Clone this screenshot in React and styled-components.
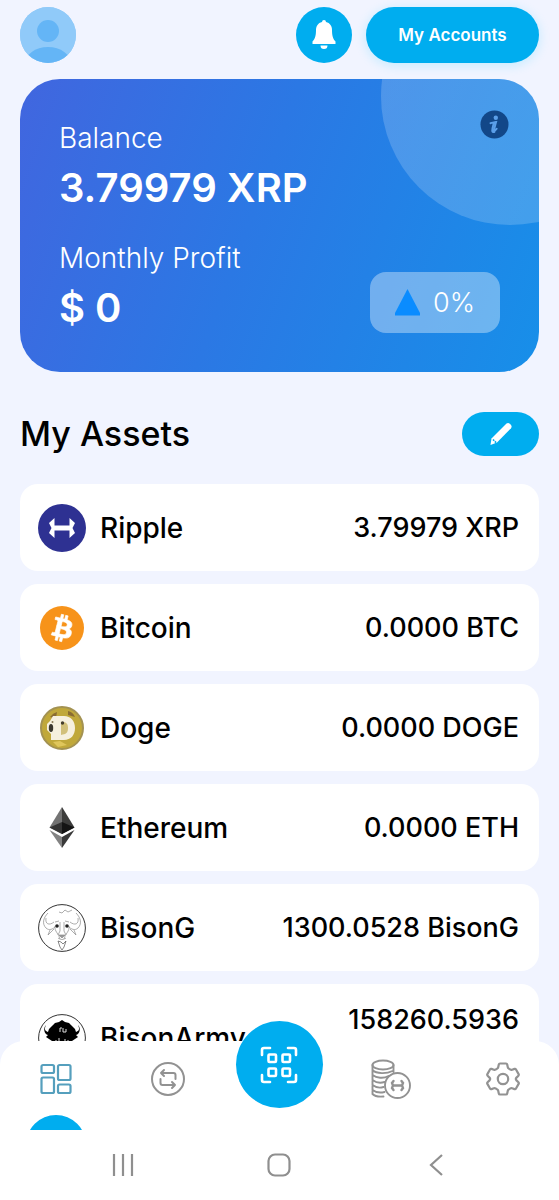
import React from "react";
import styled, { createGlobalStyle } from "styled-components";

const Global = createGlobalStyle`
  * { box-sizing: border-box; }
  body { margin: 0; background: #f1f4ff; color: #000; font-family: Inter, "Liberation Sans", sans-serif; }
  button { border: 0; padding: 0; margin: 0; font: inherit; color: inherit; background: none; cursor: pointer; }
  h1, h2, p, dl, dt, dd, ul { margin: 0; padding: 0; font-weight: inherit; }
  svg { display: block; flex: none; }
`;

const Shell = styled.div`
  display: flex;
  flex-direction: column;
  height: 100vh;
  overflow: hidden;
`;

const Content = styled.main`
  flex: 1;
  min-height: 0;
  overflow: hidden;
  padding: 7px 20px 0;
`;

const TopBar = styled.header`
  display: flex;
  align-items: center;
  gap: 14px;
`;

const RoundButton = styled.button`
  width: 56px;
  height: 56px;
  border-radius: 50%;
  overflow: hidden;
  display: flex;
  align-items: center;
  justify-content: center;
  background: ${(p) => p.$fill};
  margin-right: ${(p) => (p.$first ? "auto" : "0")};
`;

const AccountsButton = styled.button`
  height: 56px;
  width: 173px;
  border-radius: 28px;
  background: #00adef;
  color: #fff;
  font-size: 17px;
  font-weight: 600;
  box-shadow: 0 2px 12px #00c8ff33;
`;

const BalanceCard = styled.section`
  position: relative;
  overflow: hidden;
  margin-top: 16px;
  padding: 41px 39px;
  height: 293px;
  border-radius: 40px;
  background: linear-gradient(110deg, #4166df 0%, #2b78e4 45%, #178fe9 100%);
  color: #fff;
`;

const Bubble = styled.div`
  position: absolute;
  top: -112px;
  right: -100px;
  width: 258px;
  height: 258px;
  border-radius: 50%;
  background: linear-gradient(135deg, #ffffff30, #ffffff2c);
`;

const InfoButton = styled.button`
  position: absolute;
  top: 31px;
  right: 30px;
`;

const Stats = styled.dl`
  display: flex;
  flex-direction: column;
`;

const StatLabel = styled.dt`
  font-size: 28px;
  font-weight: 300;
  line-height: 36px;
`;

const StatValue = styled.dd`
  font-size: 40px;
  font-weight: 600;
  line-height: 64px;
  margin-bottom: 20px;
`;

const ChangeBadge = styled.div`
  position: absolute;
  right: 39px;
  bottom: 39px;
  width: 130px;
  height: 61px;
  border-radius: 16px;
  display: flex;
  align-items: center;
  justify-content: center;
  gap: 13px;
  background: #ffffff5c;
  font-size: 27px;
  font-weight: 300;
`;

const SectionHead = styled.div`
  display: flex;
  align-items: center;
  justify-content: space-between;
  margin-top: 40px;
`;

const SectionTitle = styled.h1`
  font-size: 34px;
  font-weight: 500;
  line-height: 44px;
`;

const EditButton = styled.button`
  width: 77px;
  height: 44px;
  border-radius: 22px;
  display: flex;
  align-items: center;
  justify-content: center;
  background: #00adef;
`;

const AssetList = styled.ul`
  display: flex;
  flex-direction: column;
  gap: 13px;
  margin-top: 28px;
  list-style: none;
`;

const AssetRow = styled.li`
  display: flex;
  align-items: center;
  gap: 14px;
  min-height: 87px;
  padding: 18px 20px 18px 18px;
  border-radius: 18px;
  background: #fff;
  font-weight: 500;
  line-height: 36px;
`;

const AssetName = styled.span`
  font-size: 28px;
`;

const AssetAmount = styled.span`
  flex: 1;
  font-size: 27px;
  text-align: right;
`;

const TabBar = styled.nav`
  position: relative;
  flex: none;
  display: grid;
  grid-template-columns: repeat(5, 1fr);
  justify-items: center;
  height: 89px;
  margin-top: -30px;
  padding-top: 18px;
  border-radius: 24px 24px 0 0;
  background: #fff;
`;

const Tab = styled.button`
  width: 40px;
  height: 40px;
  display: flex;
  align-items: center;
  justify-content: center;
`;

const ScanButton = styled.button`
  width: 87px;
  height: 87px;
  margin-top: -38px;
  border-radius: 50%;
  display: flex;
  align-items: center;
  justify-content: center;
  background: #00adef;
`;

const ActiveMark = styled.div`
  position: absolute;
  left: 26px;
  bottom: 0;
  width: 60px;
  height: 15px;
  overflow: hidden;
  &::before {
    content: "";
    display: block;
    width: 60px;
    height: 60px;
    border-radius: 50%;
    background: #00adef;
  }
`;

const SystemBar = styled.footer`
  flex: none;
  display: flex;
  justify-content: space-around;
  align-items: center;
  height: 70px;
  padding: 0 45px;
  background: #fff;
`;

const Avatar = () => (
  <svg width="56" height="56" viewBox="0 0 56 56">
    <rect width="56" height="56" fill="#90caf9" />
    <circle cx="28" cy="24" r="11" fill="#64b5f6" />
    <ellipse cx="28" cy="57" rx="23" ry="17" fill="#64b5f6" />
  </svg>
);

const Bell = () => (
  <svg width="24" height="30" viewBox="0 0 24 30" fill="#fff">
    <path d="M12 0a2 2 0 0 1 2 2c4 1 6 4 6 8 0 6 1 9 3.500 11.500V24H.5v-2.500C3 19 4 16 4 10c0-4 2-7 6-8a2 2 0 0 1 2-2ZM8.500 25.500h7a3.500 3.500 0 0 1-7 0Z" />
  </svg>
);

const Info = () => (
  <svg width="29" height="29" viewBox="0 0 29 29">
    <circle cx="14.500" cy="14.500" r="14" fill="#124788" />
    <circle cx="15.800" cy="7.800" r="2.200" fill="#5b9fe9" />
    <path d="M10.500 13.200c2-.4 3.900-1 5.600-1.200-.8 3-1.700 6-2.200 9 .9 0 1.700-.7 2.800-2.200M13.900 12.800c-.6 2.600-1.900 5.500-1.700 8 .1 1.300 1.400 1.500 2.300 1" fill="none" stroke="#5b9fe9" strokeWidth="1.900" strokeLinecap="round" />
  </svg>
);

const UpTriangle = () => (
  <svg width="25" height="27" viewBox="0 0 25 27">
    <path d="M12.500 0 25 24v2.500H0V24Z" fill="#0a8cff" />
  </svg>
);

const Pencil = () => (
  <svg width="24" height="24" viewBox="0 0 24 24">
    <path d="M17.500 1.500q1.800-1.200 3.300.3l1 1q1.600 1.700.2 3.400L8 20.500l-6.500 2.500L2.500 16.500Z" fill="#fff" />
    <path d="m4 17.500 3.200 3.300" fill="none" stroke="#00adef" strokeWidth="1.600" strokeDasharray="1.800 .8" />
  </svg>
);

const RippleLogo = () => (
  <svg width="48" height="48" viewBox="0 0 48 48">
    <circle cx="24" cy="24" r="24" fill="#2e3192" />
    <path d="M16.500 14 11 19l2.500 5-2.500 5 5.500 5v-7.500h15V34l5.500-5-2.500-5 2.500-5-5.500-5v7.500h-15Z" fill="#fff" />
  </svg>
);

const BitcoinLogo = () => (
  <svg width="48" height="48" viewBox="0 0 48 48">
    <circle cx="24" cy="24" r="22" fill="#f7931a" />
    <g transform="translate(2 2) scale(1.375)">
      <path fill="#fff" stroke="#fff" strokeWidth=".5" d="M23.189 14.020c.314-2.096-1.283-3.223-3.465-3.975l.708-2.840-1.728-.43-.690 2.765c-.454-.114-.920-.220-1.385-.326l.695-2.783L15.596 6l-.708 2.839c-.376-.086-.746-.170-1.104-.260l.002-.009-2.384-.595-.460 1.846s1.283.294 1.256.312c.700.175.826.638.805 1.006l-.806 3.235c.048.012.110.030.180.057l-.183-.045-1.130 4.532c-.086.212-.303.531-.793.410.018.025-1.256-.313-1.256-.313l-.858 1.978 2.250.561c.418.105.828.215 1.231.318l-.715 2.872 1.727.430.708-2.840c.472.127.930.245 1.378.357l-.706 2.828 1.728.430.715-2.866c2.948.558 5.164.333 6.097-2.333.752-2.146-.037-3.385-1.588-4.192 1.130-.260 1.980-1.003 2.207-2.538Zm-3.950 5.538c-.533 2.147-4.148.986-5.320.695l.950-3.805c1.172.293 4.929.872 4.370 3.110Zm.535-5.569c-.487 1.953-3.495.960-4.470.717l.860-3.450c.975.243 4.118.696 3.610 2.733Z" />
    </g>
  </svg>
);

const DogeLogo = () => (
  <svg width="48" height="48" viewBox="0 0 48 48">
    <circle cx="24" cy="24" r="21" fill="#c0a83a" stroke="#a39252" strokeWidth="2" />
    <path d="M30 7q5 1 7 6l-7-2ZM12 13q3-4 7-5l-1 6Z" fill="#8a6c31" />
    <path d="M15 12h11c7 0 11 5 11 12s-4 12-11 12H13v-6l-4-4v-6l3-3Z" fill="#f6f0de" />
    <path d="M23 18c5 0 7 1 7 6s-2 6-7 7Z" fill="#d2c07a" />
    <ellipse cx="13" cy="24" rx="2.200" ry="4" fill="#3b382e" />
    <circle cx="24.500" cy="19" r="1.700" fill="#443d2c" />
    <circle cx="14.500" cy="18" r="1" fill="#8a7b56" />
    <path d="m15 38 7-1 7 4-9 2Z" fill="#dfc65b" />
  </svg>
);

const EthereumLogo = () => (
  <svg width="48" height="48" viewBox="0 0 48 48">
    <path d="M24 3v27L11.500 23.500Z" fill="#737373" />
    <path d="M24 3v27l12.500-6.500Z" fill="#3c3c3b" />
    <path d="m24 18-12.500 5.500L24 30Z" fill="#343434" />
    <path d="m24 18 12.500 5.500L24 30Z" fill="#141414" />
    <path d="M11.500 26 24 33v11Z" fill="#828282" />
    <path d="M36.500 26 24 33v11Z" fill="#393939" />
  </svg>
);

const BisonGLogo = () => (
  <svg width="48" height="48" viewBox="0 0 48 48" fill="none" stroke="#8a8a8a" strokeWidth=".7">
    <circle cx="24" cy="24" r="23.400" stroke="#333" strokeWidth="1" />
    <path d="M10 9c-5 5-6 11-2 15 3 3 7 1 9-1M8 14c-1 6 3 8 8 4M38 9c5 5 6 11 2 15-3 3-7 1-9-1M40 14c1 6-3 8-8 4" />
    <path d="M17 22c-1 5 4 8 5 13M31 22c1 5-4 8-5 13M22 18v9l-2 4M26 18v9l2 4M20 34c3 2 5 2 8 0M16 25l-6 6 2-5M32 25l6 6-2-5M21 8l3 1 3-3 3 2 4-2M17 18l4-1M27 17l4 1" />
    <path d="m20 37 2 6 2 3 2-3 2-6-3 3-2-2Z" stroke="#555" />
    <circle cx="19" cy="22" r="1.800" fill="#222" stroke="none" />
    <circle cx="29" cy="22" r="1.800" fill="#222" stroke="none" />
    <path d="M21 31h6l-3 3Z" fill="#999" />
  </svg>
);

const BisonArmyLogo = () => (
  <svg width="48" height="48" viewBox="0 0 48 48">
    <circle cx="24" cy="24" r="23.400" fill="#fff" stroke="#333" />
    <path d="m24 6 3 2 4 1 3 3 3 3 1 3c3-1 4-3 2-7 3 3 2 9-2 10l2 2-6 4-2 13-8 5-8-5-2-13-6-4 2-2c-4-1-5-7-2-10-2 4-1 6 2 7l1-3 3-3 3-3 4-1Z" />
    <path d="M22 14v4M22 14h2M25 14v4h3v-3M18 26v5M21 24v7M27 25v6M30 26v4" fill="none" stroke="#ddd" />
  </svg>
);

const Dashboard = () => (
  <svg width="32" height="32" viewBox="0 0 32 32" fill="none" stroke="#559fbd" strokeWidth="2.200">
    <rect x="1.500" y="2" width="12.500" height="8" rx="1.500" />
    <rect x="18" y="2" width="12.500" height="15" rx="1.500" />
    <rect x="1.500" y="14.500" width="12.500" height="15.500" rx="1.500" />
    <rect x="18" y="21.500" width="12.500" height="8.500" rx="1.500" />
  </svg>
);

const Exchange = () => (
  <svg width="34" height="34" viewBox="0 0 34 34" fill="none" stroke="#929292" strokeWidth="2" strokeLinecap="round" strokeLinejoin="round">
    <circle cx="17" cy="17" r="16" />
    <path d="M24.500 17v-4q0-2-2-2H10m3-3-3 3 3 3M9.500 17v4q0 2 2 2H24m-3-3 3 3-3 3" />
  </svg>
);

const Scan = () => (
  <svg width="38" height="38" viewBox="0 0 38 38" fill="none" stroke="#fff" strokeWidth="2.600" strokeLinecap="round" strokeLinejoin="round">
    <path d="M2 9V4q0-2 2-2h6M28 2h6q2 0 2 2v5M36 29v5q0 2-2 2h-6M10 36H4q-2 0-2-2v-5" />
    <rect x="8.500" y="8.500" width="7.500" height="7.500" rx="1" />
    <rect x="22.500" y="8.500" width="7.500" height="7.500" rx="1" />
    <rect x="8.500" y="22.500" width="7.500" height="7.500" rx="1" />
    <rect x="22.500" y="22.500" width="7.500" height="7.500" rx="1" />
  </svg>
);

const Coins = () => (
  <svg width="40" height="40" viewBox="0 0 40 40" fill="none" stroke="#929292" strokeWidth="1.900" strokeLinecap="round">
    <ellipse cx="12" cy="6" rx="10.500" ry="4.500" />
    <path d="M1.500 6v29c2 2 6 3 11 2.500M22.500 6v7M1.500 11c4 4 14 4 20 1M1.500 16c4 3 11 4 16 1M1.500 21c4 3 9 3 12 2M1.500 26c4 3 8 3 11 2M1.500 31c4 3 8 3 12 2" />
    <circle cx="26.500" cy="26.500" r="12.500" />
    <path d="m22.500 22-1.500 2 1 2.500-1 2.500 1.500 2M30.500 22l1.500 2-1 2.500 1 2.500-1.500 2M22.500 26.500h8" strokeWidth="2.400" />
  </svg>
);

const Gear = () => (
  <svg width="34" height="34" viewBox="0 0 34 34" fill="none" stroke="#929292" strokeWidth="2.200" strokeLinejoin="round">
    <path d="M14 1.500h6q1 0 1.200 1l.6 2.700q.2 1 1 1.400l1.600 1q.8.4 1.700.1l2.400-.8q1-.3 1.500.6l2.600 4.600q.5.9-.2 1.600l-1.900 1.900q-.7.700-.7 1.400t.7 1.400l1.900 1.900q.7.700.2 1.600L30 26.500q-.5.9-1.500.6l-2.400-.8q-.9-.3-1.700.1l-1.600 1q-.8.4-1 1.400l-.6 2.700q-.2 1-1.200 1h-6q-1 0-1.200-1l-.6-2.700q-.2-1-1-1.400l-1.600-1q-.8-.4-1.700-.1l-2.400.8q-1 .3-1.500-.6l-2.600-4.600q-.5-.9.2-1.600l1.900-1.900q.7-.7.700-1.400t-.7-1.400l-1.900-1.900q-.7-.7-.2-1.600L4 7.500q.5-.9 1.500-.6l2.400.8q.9.300 1.700-.1l1.600-1q.8-.4 1-1.400l.6-2.700q.2-1 1.200-1Z" />
    <circle cx="17" cy="17" r="5.200" />
  </svg>
);

const Recents = () => (
  <svg width="24" height="24" viewBox="0 0 24 24" stroke="#8f8f8f" strokeWidth="2.200">
    <path d="M3 1v22M12 1v22M21 1v22" />
  </svg>
);

const Home = () => (
  <svg width="24" height="24" viewBox="0 0 24 24" fill="none" stroke="#8f8f8f" strokeWidth="2.200">
    <rect x="1.500" y="1.500" width="21" height="21" rx="6.500" />
  </svg>
);

const Back = () => (
  <svg width="24" height="24" viewBox="0 0 24 24" fill="none" stroke="#8f8f8f" strokeWidth="2.200">
    <path d="M18 2 7 12l11 10" />
  </svg>
);

const assets = [
  { name: "Ripple", amount: "3.79979 XRP", Logo: RippleLogo },
  { name: "Bitcoin", amount: "0.0000 BTC", Logo: BitcoinLogo },
  { name: "Doge", amount: "0.0000 DOGE", Logo: DogeLogo },
  { name: "Ethereum", amount: "0.0000 ETH", Logo: EthereumLogo },
  { name: "BisonG", amount: "1300.0528 BisonG", Logo: BisonGLogo },
  { name: "BisonArmy", amount: "158260.5936 BisonArmy", Logo: BisonArmyLogo },
];

export default function App() {
  return (
    <Shell>
      <Global />
      <Content>
        <TopBar>
          <RoundButton $fill="#90caf9" $first aria-label="Profile"><Avatar /></RoundButton>
          <RoundButton $fill="#00adef" aria-label="Notifications"><Bell /></RoundButton>
          <AccountsButton>My Accounts</AccountsButton>
        </TopBar>
        <BalanceCard>
          <Bubble />
          <InfoButton aria-label="Balance details"><Info /></InfoButton>
          <Stats>
            <StatLabel>Balance</StatLabel>
            <StatValue>3.79979 XRP</StatValue>
            <StatLabel>Monthly Profit</StatLabel>
            <StatValue>$ 0</StatValue>
          </Stats>
          <ChangeBadge><UpTriangle />0%</ChangeBadge>
        </BalanceCard>
        <SectionHead>
          <SectionTitle>My Assets</SectionTitle>
          <EditButton aria-label="Edit assets"><Pencil /></EditButton>
        </SectionHead>
        <AssetList>
          {assets.map(({ name, amount, Logo }) => (
            <AssetRow key={name}>
              <Logo />
              <AssetName>{name}</AssetName>
              <AssetAmount>{amount}</AssetAmount>
            </AssetRow>
          ))}
        </AssetList>
      </Content>
      <TabBar aria-label="Main">
        <Tab aria-label="Dashboard"><Dashboard /></Tab>
        <Tab aria-label="Exchange"><Exchange /></Tab>
        <ScanButton aria-label="Scan code"><Scan /></ScanButton>
        <Tab aria-label="Coins"><Coins /></Tab>
        <Tab aria-label="Settings"><Gear /></Tab>
        <ActiveMark />
      </TabBar>
      <SystemBar>
        <Tab aria-label="Recent apps"><Recents /></Tab>
        <Tab aria-label="Home"><Home /></Tab>
        <Tab aria-label="Back"><Back /></Tab>
      </SystemBar>
    </Shell>
  );
}
